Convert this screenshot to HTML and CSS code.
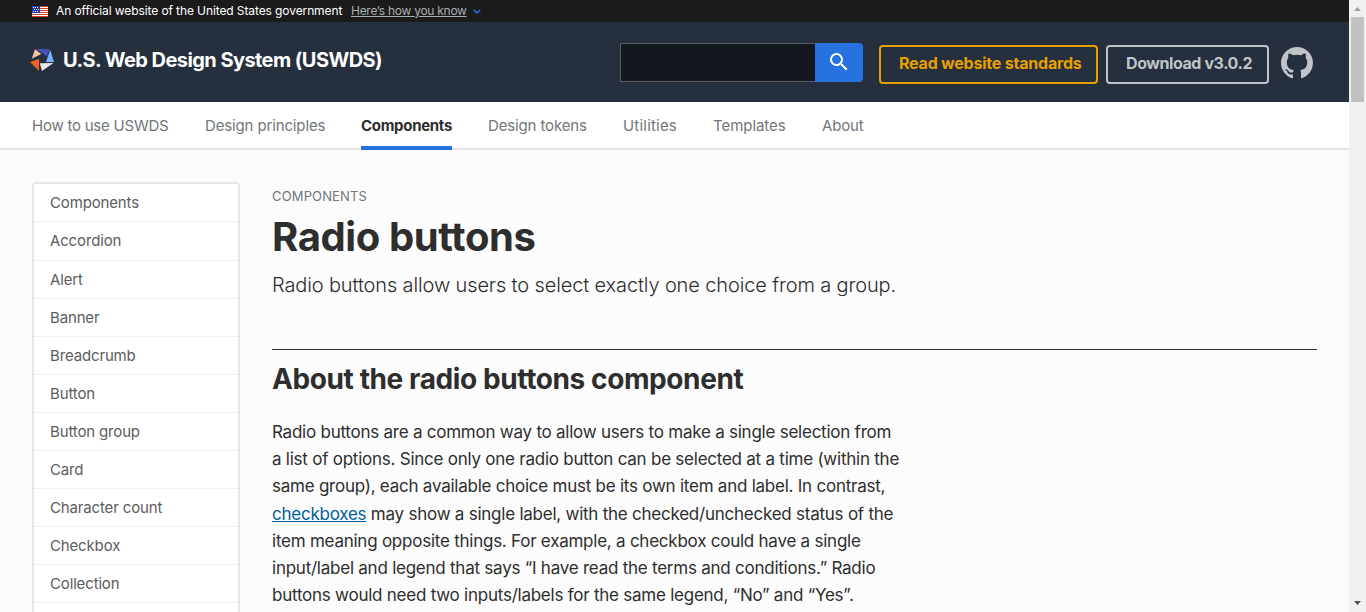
FILE: index.html
```html
<!DOCTYPE html>
<html lang="en">
<head>
<meta charset="utf-8">
<title>Radio buttons | U.S. Web Design System (USWDS)</title>
<link rel="stylesheet" href="styles.css">
</head>
<body>
<div class="page">
<div class="site">
  <section class="banner">
    <svg class="flag" width="16" height="11" viewBox="0 0 16 11"><path fill="#fff" d="M0 0h16v11H0z"/><path fill="#db3e1f" d="M0 0h16v1H0zM0 2h16v1H0zM0 4h16v1H0zM0 6h16v1H0zM0 8h16v1H0zM0 10h16v1H0z"/><path fill="#1e33b1" d="M0 0h8v7H0z"/><path fill="#fff" d="M1 1h1v1H1zM3 1h1v1H3zM5 1h1v1H5zM2 3h1v1H2zM4 3h1v1H4zM6 3h1v1H6zM1 5h1v1H1zM3 5h1v1H3zM5 5h1v1H5z"/></svg>
    <span class="banner-text">An official website of the United States government</span>
    <a class="banner-link">Here’s how you know</a>
    <svg class="chev" width="8" height="5" viewBox="0 0 8 5"><path d="M.7.7 4 4 7.3.7" fill="none" stroke="#2672de" stroke-width="1.4"/></svg>
  </section>
  <header class="header">
    <div class="brand">
      <svg class="logo" width="24" height="22" viewBox="0 0 24 22"><path fill="#f9c2a4" d="M5 .2 11.3 5 1.8 9.8z"/><path fill="#4a50b4" d="M6 0h13.6L17 7.5z"/><path fill="#73b3ff" d="M20.2.8 24 13h-8z"/><path fill="#e6e6e6" d="M9.8 14.2 23.5 14 12 22z"/><path fill="#f26322" d="M0 13 9 10v12z"/></svg>
      <span class="brand-text">U.S. Web Design System (USWDS)</span>
    </div>
    <form class="search"><div class="field"></div><div class="go"><svg width="24" height="24" viewBox="0 0 24 24"><path fill="#fff" d="M15.5 14h-.79l-.28-.27A6.47 6.47 0 0 0 16 9.5 6.5 6.5 0 1 0 9.5 16c1.61 0 3.09-.59 4.23-1.57l.27.28v.79l5 4.99L20.49 19l-4.99-5zm-6 0C7.01 14 5 11.99 5 9.5S7.01 5 9.5 5 14 7.01 14 9.5 11.99 14 9.5 14z"/></svg></div></form>
    <a class="btn gold"><span>Read website standards</span></a>
    <a class="btn download"><span>Download v3.0.2</span></a>
    <svg class="github" width="32" height="32" viewBox="0 0 16 16"><path fill="#c0c3c8" d="M8 0C3.58 0 0 3.58 0 8c0 3.54 2.29 6.53 5.47 7.59.4.07.55-.17.55-.38 0-.19-.01-.82-.01-1.49-2.01.37-2.53-.49-2.69-.94-.09-.23-.48-.94-.82-1.13-.28-.15-.68-.52-.01-.53.63-.01 1.08.58 1.23.82.72 1.21 1.87.87 2.33.66.07-.52.28-.87.51-1.07-1.78-.2-3.64-.89-3.64-3.95 0-.87.31-1.59.82-2.15-.08-.2-.36-1.02.08-2.12 0 0 .67-.21 2.2.82.64-.18 1.32-.27 2-.27s1.36.09 2 .27c1.53-1.04 2.2-.82 2.2-.82.44 1.1.16 1.92.08 2.12.51.56.82 1.27.82 2.15 0 3.07-1.87 3.75-3.65 3.95.29.25.54.73.54 1.48 0 1.07-.01 1.93-.01 2.2 0 .21.15.46.55.38A8.01 8.01 0 0 0 16 8c0-4.42-3.58-8-8-8z"/></svg>
  </header>
  <nav class="nav">
    <a class="n-how">How to use USWDS</a><a class="n-principles">Design principles</a><a class="n-components current">Components</a><a class="n-tokens">Design tokens</a><a class="n-utilities">Utilities</a><a class="n-templates">Templates</a><a>About</a>
  </nav>
  <div class="content">
    <aside class="side"><a>Components</a><a>Accordion</a><a>Alert</a><a>Banner</a><a>Breadcrumb</a><a>Button</a><a>Button group</a><a>Card</a><a>Character count</a><a>Checkbox</a><a>Collection</a><a></a></aside>
    <main class="main">
      <div class="eyebrow">COMPONENTS</div>
      <h1>Radio buttons</h1>
      <p class="intro">Radio buttons allow users to select exactly one choice from a group.</p>
      <h2>About the radio buttons component</h2>
      <p class="body">Radio buttons are a common way to allow users to make a single selection from<br>a list of options. Since only one radio button can be selected at a time (within the<br>same group), each available choice must be its own item and label. In contrast,<br><a>checkboxes</a> may show a single label, with the checked/unchecked status of the<br>item meaning opposite things. For example, a checkbox could have a single<br>input/label and legend that says “I have read the terms and conditions.” Radio<br>buttons would need two inputs/labels for the same legend, “No” and “Yes”.</p>
    </main>
  </div>
</div>
<div class="scroll">
  <svg class="arrow" width="7" height="4" viewBox="0 0 7 4"><path fill="#a3a3a3" d="M3.5 0 7 4H0z"/></svg>
  <div class="thumb"></div>
  <svg class="arrow down" width="7" height="4" viewBox="0 0 7 4"><path fill="#505050" d="M3.5 4 7 0H0z"/></svg>
</div>
</div>
</body>
</html>
```
FILE: styles.css
```css
*{box-sizing:border-box}
body{margin:0;font-family:"Inter",sans-serif;color:#2e2e2e}
.page{display:flex;height:612px;overflow:hidden;background:#fcfcfc}
.site{flex:1;min-width:0}
.banner{background:#1b1b1b;height:22px;display:flex;align-items:center;color:#fff;font-size:12px;line-height:20px;padding:0 0 0 32px}
.flag{margin:0 8px 0 0}
.banner-text{width:295px;letter-spacing:-.1px;white-space:nowrap;margin-top:-1px}
.banner-link{width:122px;letter-spacing:-.27px;color:#a9aeb1;text-decoration:underline;white-space:nowrap;margin-top:-1px}
.chev{margin-top:1px}
.header{background:#252f3e;height:80px;display:flex;align-items:flex-start;color:#fff;padding-left:30px}
.brand{display:flex;width:590px;padding-top:26px;gap:9px}
.brand-text{font-size:20px;line-height:24px;font-weight:700;letter-spacing:-.56px}
.logo{margin-top:1px}
.search{display:flex;margin:21px 16px 0 0}
.field{width:195px;height:39px;background:#13171f;border:1px solid #5c5c5c;border-right:0}
.go{width:48px;height:39px;background:#2672de;border-radius:0 4px 4px 0;display:flex;align-items:center;justify-content:center;padding-bottom:2px}
.btn{width:163px;height:39px;margin-top:23px;border:2px solid #c0c3c8;border-radius:4px;color:#c0c3c8;font-size:16px;font-weight:700;line-height:33px;padding-left:18px;white-space:nowrap;letter-spacing:-.42px}
.gold{width:219px;color:#e5a000;border-color:#e5a000;margin-right:8px;letter-spacing:-.21px}
.github{margin:25px 0 0 12px}
.nav{display:flex;gap:36px;padding-left:32px;height:48px;font-size:15px;line-height:48px;color:#71767a;background:#fff;letter-spacing:-.14px;white-space:nowrap;border-bottom:2px solid #e6e6e6}
.nav a{height:48px}
.n-how{width:137px;letter-spacing:-.23px}
.n-principles{width:120px}
.n-components{width:91px;letter-spacing:-.3px}
.n-tokens{width:99px}
.n-utilities{width:54px;letter-spacing:.2px}
.n-templates{width:73px;letter-spacing:-.05px}
.nav .current{font-weight:700;color:#2e2e2e;border-bottom:4px solid #2672de}
.content{display:flex;align-items:flex-start;padding:32px 32px 0}
.side{width:208px;display:flex;flex-direction:column;background:#fff;border:2px solid #e6e6e6;border-radius:4px}
.side a{height:38px;border-top:1px solid #f0f0f0;padding-left:16px;font-size:15px;line-height:37px;color:#5c5c5c;letter-spacing:-.15px}
.side a:first-child{height:37px;border-top:0}
.side a:nth-child(2){height:39px}
.main{margin-left:32px;flex:1;white-space:nowrap}
.eyebrow{font-size:13px;line-height:16px;margin-top:6px;color:#71767a;letter-spacing:.15px}
h1{font-size:40px;line-height:48px;margin:9px 0 0;letter-spacing:-.4px}
.intro{font-size:20px;line-height:32px;font-weight:300;margin:8px 0 48px;letter-spacing:-.13px}
h2{font-size:28px;line-height:34px;margin:0;border-top:1px solid #2e2e2e;padding-top:12px;letter-spacing:-.4px}
.body{font-size:17px;line-height:27.2px;margin:23px 0 0;letter-spacing:-.24px}
.body a{color:#005ea2;text-decoration:underline}
.scroll{width:17px;background:#f1f1f1;display:flex;flex-direction:column;align-items:center}
.thumb{width:13px;height:85px;background:#c1c1c1;margin-top:6px}
.arrow{margin-top:7px}
.down{margin:auto 0 7px}
```
